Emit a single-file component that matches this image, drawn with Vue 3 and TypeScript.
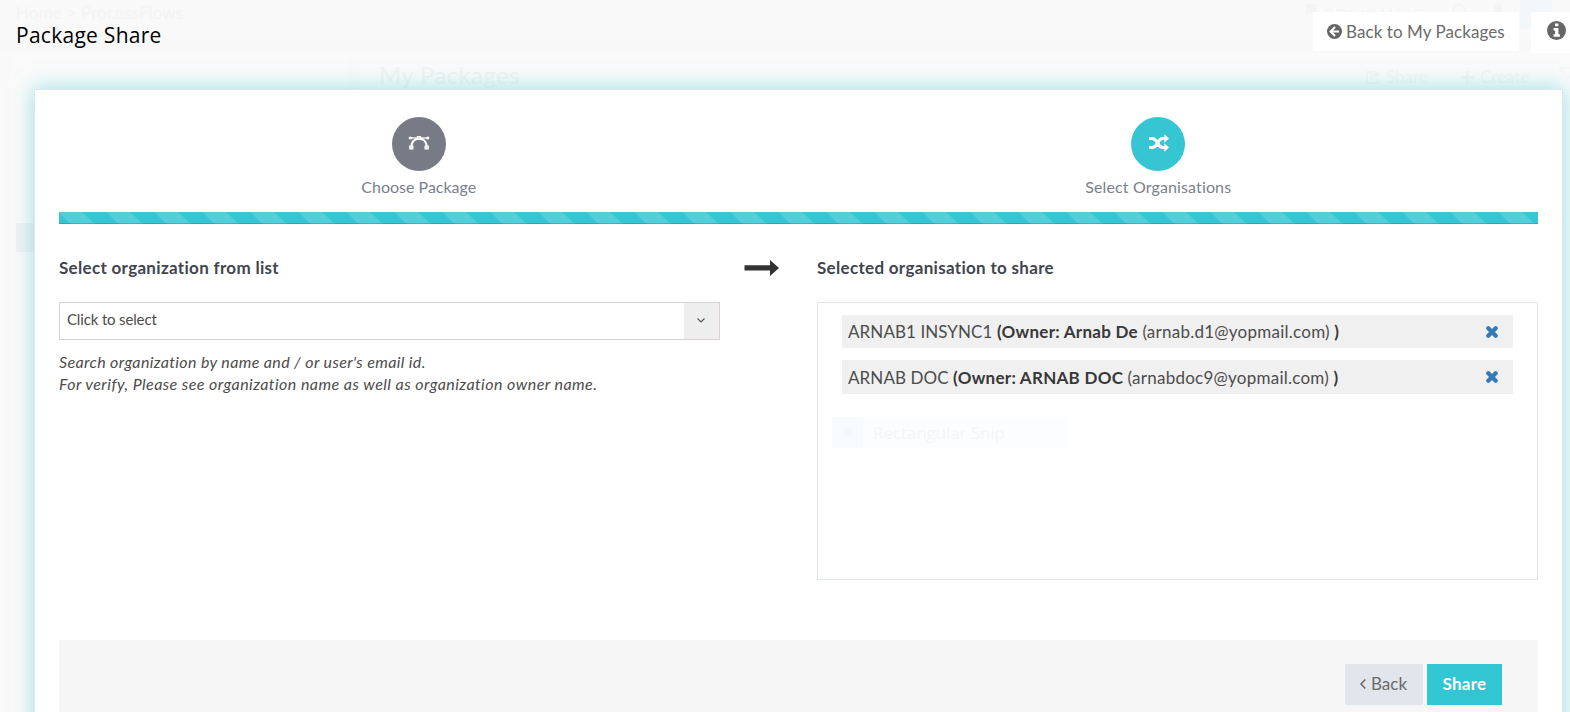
<script setup lang="ts">
import { ref } from 'vue'

interface Organisation {
  id: number
  name: string
  owner: string
  email: string
}

const organisations = ref<Organisation[]>([
  { id: 1, name: 'ARNAB1 INSYNC1', owner: 'Arnab De', email: 'arnab.d1@yopmail.com' },
  { id: 2, name: 'ARNAB DOC', owner: 'ARNAB DOC', email: 'arnabdoc9@yopmail.com' },
])

function removeOrganisation(id: number): void {
  organisations.value = organisations.value.filter((o) => o.id !== id)
}
</script>

<template>
  <div class="page">
    <div class="backdrop" aria-hidden="true">
      <div class="crumbs">Home &gt; ProcessFlows</div>
      <div class="bookmarks">
        <svg width="10" height="12" viewBox="0 0 10 12"><path d="M0 0h10v12L5 8l-5 4z" fill="currentColor" /></svg>
        <span>BOOKMARKS</span>
      </div>
      <svg class="ghost-help" width="14" height="14" viewBox="0 0 14 14"><circle cx="7" cy="7" r="6" fill="none" stroke="currentColor" stroke-width="2" /></svg>
      <svg class="ghost-bell" width="12" height="14" viewBox="0 0 12 14"><path d="M0 12c2-2 1-10 6-10s4 8 6 10z" fill="currentColor" /></svg>
      <div class="ghost-tile"></div>
      <div class="band"></div>
      <div class="panel-left"></div>
      <div class="panel-right"></div>
      <div class="ghost-title">My Packages</div>
      <div class="ghost-share">
        <svg width="14" height="14" viewBox="0 0 14 14" fill="none" stroke="currentColor" stroke-width="2"><path d="M7 2H1v11h11V9M5 9c0-4 3-5 7-5M9 1l4 3-4 3" /></svg>
        Share
      </div>
      <div class="ghost-create">
        <svg width="13" height="13" viewBox="0 0 13 13"><path d="M5 0h3v5h5v3H8v5H5V8H0V5h5z" fill="currentColor" /></svg>
        Create
      </div>
      <svg class="ghost-filter" width="12" height="18" viewBox="0 0 12 18" fill="none" stroke="currentColor"><path d="M0 1h20L8 12z" /></svg>
      <div class="ghost-row"></div>
    </div>

    <header class="topbar">
      <h1>Package Share</h1>
      <div class="top-actions">
        <button class="back-packages">
          <svg width="15" height="15" viewBox="0 0 16 16">
            <circle cx="8" cy="8" r="8" fill="#666" />
            <path d="M8.6 3.2 3.8 8l4.8 4.8M4.2 8h8.6" fill="none" stroke="#fff" stroke-width="2.1" />
          </svg>
          <span>Back to My Packages</span>
        </button>
        <button class="info" aria-label="Information">
          <svg width="19" height="19" viewBox="0 0 19 19">
            <circle cx="9.5" cy="9.5" r="9.5" fill="#666" />
            <path d="M8 2.4h3.4v2.9H8zM6.5 7h4.9v6.3h1.5v2.5H6.5v-2.5h1.6V9.4H6.5z" fill="#fff" />
          </svg>
        </button>
      </div>
    </header>

    <main class="card">
      <div class="steps">
        <div class="step">
          <span class="dot grey">
            <svg width="22" height="16" viewBox="0 0 22 16" fill="none" stroke="#fff">
              <path d="M2 3h18" stroke-width="1.3" />
              <path d="M3.3 12C3.3 7 6.3 3.6 11 3.6S18.7 7 18.7 12" stroke-width="2.2" />
              <circle cx="2.2" cy="3" r="1.600" fill="#fff" stroke="none" />
              <circle cx="19.8" cy="3" r="1.600" fill="#fff" stroke="none" />
              <rect x="9.3" y="1.600" width="3.400" height="2.800" fill="#e4e4e8" />
              <rect x="1.700" y="11" width="3.300" height="3" fill="#e4e4e8" />
              <rect x="17" y="11" width="3.300" height="3" fill="#e4e4e8" />
            </svg>
          </span>
          <span class="step-name">Choose Package</span>
        </div>
        <div class="step">
          <span class="dot teal">
            <svg width="20" height="18" viewBox="0 0 20 18">
              <path d="M0 4.500h3c3 0 4.300 2.200 5.500 4.500s2.500 4.500 5 4.500H16M0 13.500h3c3 0 4.300-2.200 5.500-4.500s2.500-4.500 5-4.500H16" fill="none" stroke="#fff" stroke-width="3.200" />
              <path d="M15.300.300 20 4.500l-4.700 4.200zM15.300 9.300l4.700 4.200-4.700 4.200z" fill="#fff" />
            </svg>
          </span>
          <span class="step-name select">Select Organisations</span>
        </div>
      </div>

      <div class="progress"></div>

      <div class="columns">
        <section class="source">
          <h2>Select organization from list</h2>
          <div class="combo">
            <span>Click to select</span>
            <div class="caret">
              <svg width="8" height="5" viewBox="0 0 8 5"><path d="M.5.500 4 4 7.500.500" fill="none" stroke="#555" stroke-width="1.100" /></svg>
            </div>
          </div>
          <p class="hint"><span class="hint-a">Search organization by name and / or user's email id.</span><br /><span class="hint-b">For verify, Please see organization name as well as organization owner name.</span></p>
        </section>

        <div class="arrow">
          <svg width="36" height="16" viewBox="0 0 36 16"><path d="M0.500 5.300H26V0l9 8-9 8v-5.600H.500z" fill="#333" /></svg>
        </div>

        <section class="target">
          <h2>Selected organisation to share</h2>
          <div class="box">
            <div v-for="org in organisations" :key="org.id" class="org">
              <span class="org-text">{{ org.name }} <b>(Owner: {{ org.owner }}</b> <span class="email">({{ org.email }})</span> <b>)</b></span>
              <button class="remove" aria-label="Remove" @click="removeOrganisation(org.id)">
                <svg width="12" height="12" viewBox="0 0 12 12"><path d="M2.300 2.300l7.400 7.400M9.700 2.300L2.300 9.700" stroke="#337ab7" stroke-width="4.200" stroke-linecap="round" /></svg>
              </button>
            </div>
            <div class="snip"><i><em></em></i><span>Rectangular Snip</span></div>
          </div>
        </section>
      </div>

      <footer>
        <button class="back">
          <svg width="6" height="10" viewBox="0 0 6 10"><path d="M5.300.600 1 5l4.300 4.400" fill="none" stroke="#666" stroke-width="1.500" /></svg>
          <span>Back</span>
        </button>
        <button class="share"><span>Share</span></button>
      </footer>
    </main>
  </div>
</template>

<style>
body {
  overflow: hidden;
}
</style>

<style scoped>
.page {
  position: relative;
  box-sizing: border-box;
  height: 712px;
  overflow: hidden;
  background: #f9f9f9;
  font-family: Lato, 'Open Sans', sans-serif;
  font-variant-ligatures: none;
  color: #4c4c4c;
}

.page * {
  box-sizing: border-box;
}

.page svg {
  display: block;
  flex: none;
}

button {
  border: 0;
  padding: 0;
  font: inherit;
  color: #6b6b6b;
  display: flex;
  align-items: center;
  white-space: nowrap;
}

.backdrop > * {
  position: absolute;
  color: #f3f4f4;
  white-space: nowrap;
}

.crumbs {
  left: 16px;
  top: 2px;
  font-size: 17px;
  line-height: 22px;
  letter-spacing: 0.15px;
}

.bookmarks {
  left: 1306px;
  top: 4px;
  display: flex;
  gap: 8px;
  font-size: 16px;
}

.ghost-help {
  left: 1452px;
  top: 4px;
}

.ghost-bell {
  left: 1492px;
  top: 2px;
}

.ghost-tile {
  left: 1520px;
  top: 0;
  width: 32px;
  height: 29px;
  background: #f4f7fa;
}

.band {
  left: 0;
  top: 40px;
  width: 1570px;
  height: 12px;
  background: #f8f8f8;
}

.panel-left,
.panel-right {
  top: 52px;
  height: 660px;
  background: #fafafa;
}

.panel-left {
  left: 10px;
  width: 338px;
}

.panel-right {
  left: 360px;
  width: 1210px;
}

.backdrop .ghost-title {
  left: 379px;
  top: 60px;
  font-size: 24px;
  line-height: 30px;
  letter-spacing: 0.35px;
  color: #f0f2f2;
}

.ghost-share,
.ghost-create {
  top: 67px;
  display: flex;
  align-items: center;
  gap: 6px;
  font-size: 17px;
  line-height: 20px;
}

.ghost-share {
  left: 1366px;
}

.ghost-create {
  left: 1461px;
}

.ghost-filter {
  left: 1559px;
  top: 67px;
}

.ghost-row {
  left: 16px;
  top: 223px;
  width: 30px;
  height: 29px;
  background: #f1f2f2;
}

.topbar {
  position: relative;
  display: flex;
  justify-content: space-between;
  align-items: flex-start;
  height: 89px;
  padding: 12px 0 0 16px;
}

h1 {
  margin: 8px 0 0;
  font-family: 'Open Sans', sans-serif;
  font-weight: 400;
  font-size: 21px;
  line-height: 30px;
  letter-spacing: 0.27px;
  color: #000;
}

.top-actions {
  display: flex;
  gap: 12px;
}

.back-packages {
  width: 206px;
  height: 39px;
  padding-left: 14px;
  gap: 4px;
  font-size: 17px;
  letter-spacing: 0.07px;
  background: #fff;
}

.info {
  width: 39px;
  height: 41px;
  padding: 0 0 4px 16px;
  background: #fff;
}

.card {
  position: relative;
  width: 1529px;
  height: 680px;
  margin-left: 34px;
  padding: 27px 24px 0;
  background: #fff;
  border: 1px solid #e1e5ec;
  box-shadow: 0 0 20px rgba(54, 198, 211, 0.5);
}

.steps {
  display: flex;
  width: 1479px;
  margin-left: -10px;
}

.step {
  flex: 1;
  display: flex;
  flex-direction: column;
  align-items: center;
  height: 95px;
  color: #7a818c;
  font-size: 16px;
}

.dot {
  display: flex;
  align-items: center;
  justify-content: center;
  width: 54px;
  height: 54px;
  padding: 0 0 3px 1px;
  border-radius: 50%;
}

.grey {
  background: #777b86;
}

.teal {
  padding-left: 2px;
  background: #36c6d3;
}

.step-name {
  margin-top: 5px;
  line-height: 22px;
}

.select {
  letter-spacing: 0.13px;
}

.progress {
  height: 12px;
  background-color: #36c6d3;
  background-image: linear-gradient(45deg, rgba(255, 255, 255, 0.15) 25%, transparent 25%, transparent 50%, rgba(255, 255, 255, 0.15) 50%, rgba(255, 255, 255, 0.15) 75%, transparent 75%);
  background-size: 48px 48px;
  box-shadow: inset 0 -1px 0 rgba(0, 0, 0, 0.15);
}

.columns {
  display: flex;
  height: 416px;
  padding-top: 33px;
}

.source {
  width: 661px;
}

.target {
  width: 721px;
}

.arrow {
  width: 97px;
  padding: 3px 0 0 24px;
}

h2 {
  margin: 0 0 23px;
  font-size: 17px;
  font-weight: 700;
  line-height: 22px;
  letter-spacing: 0.31px;
  color: #41454e;
}

.combo {
  display: flex;
  justify-content: space-between;
  height: 38px;
  border: 1px solid #ddd0d3;
  font-size: 15px;
  line-height: 33px;
  letter-spacing: -0.15px;
  padding-left: 7px;
}

.caret {
  display: flex;
  align-items: center;
  justify-content: center;
  width: 35px;
  padding: 0 1px 1px 0;
  background: #eee;
}

.hint {
  margin: 11px 0 0;
  font-size: 16px;
  font-style: italic;
  line-height: 22px;
  white-space: nowrap;
}

.hint-a {
  letter-spacing: 0.36px;
}

.hint-b {
  letter-spacing: 0.44px;
}

.box {
  position: relative;
  height: 278px;
  padding: 12px 24px;
  border: 1px solid #e1e5ec;
}

.org {
  display: flex;
  align-items: center;
  justify-content: space-between;
  height: 33.4px;
  margin-bottom: 12px;
  padding: 0 15px 0 6px;
  background: #f0f0f0;
  font-size: 17px;
  letter-spacing: 0.08px;
  white-space: nowrap;
}

.org b {
  color: #383838;
  letter-spacing: 0.27px;
}

.email {
  letter-spacing: 0.25px;
}

.remove {
  background: none;
}

.snip {
  display: flex;
  align-items: center;
  width: 236px;
  height: 31px;
  margin: 23px 0 0 -10px;
  background: #fcfdff;
  color: #f4f5f6;
  font-family: 'Open Sans', sans-serif;
  font-size: 17px;
  letter-spacing: -0.1px;
}

.snip i {
  display: flex;
  align-items: center;
  justify-content: center;
  width: 31px;
  height: 31px;
  margin-right: 10px;
  background: #f7fbff;
}

.snip em {
  width: 10px;
  height: 10px;
  border-radius: 50%;
  background: #f5f6f8;
}

footer {
  display: flex;
  justify-content: flex-end;
  gap: 4px;
  height: 90px;
  padding: 24px 36px 0 0;
  background: #f6f6f6;
}

.back,
.share {
  height: 41px;
  font-size: 17px;
  padding-bottom: 2px;
}

.back {
  width: 78px;
  padding-left: 15px;
  gap: 5px;
  background: #e1e5ec;
}

.share {
  width: 75px;
  justify-content: center;
  background: #32c5d2;
  color: #fff;
  font-weight: 700;
  letter-spacing: 0.25px;
}
</style>
